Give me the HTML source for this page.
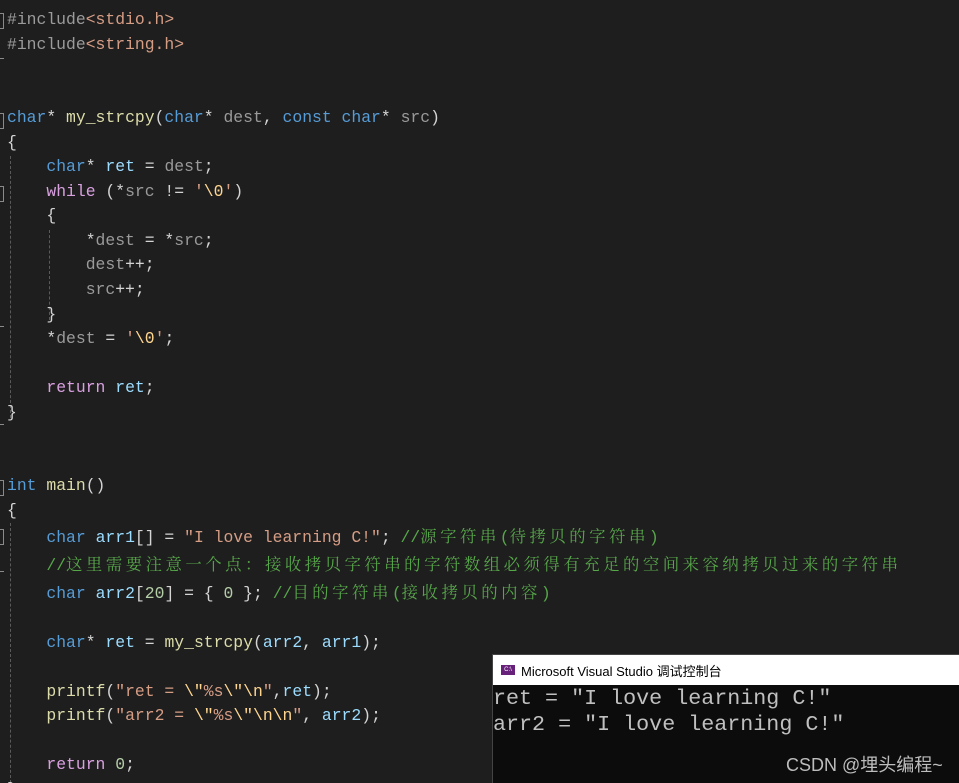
<!DOCTYPE html>
<html><head><meta charset="utf-8"><style>
html,body{margin:0;padding:0;background:#1e1e1e;width:959px;height:783px;overflow:hidden;position:relative}
pre{position:absolute;left:7px;top:8px;margin:0;font-family:"Liberation Mono","Noto Sans CJK SC",monospace;font-size:16.4px;line-height:24.55px;color:#d4d4d4;white-space:pre}
.k{color:#569cd6}.f{color:#dcdcaa}.v{color:#9cdcfe}.p{color:#9a9a9a}.s{color:#d69d85}.e{color:#ffd68f}.c{color:#57a64a}.n{color:#b5cea8}.r{color:#d8a0df}.i{color:#9b9b9b}
.z{font-family:"Noto Serif CJK SC","Noto Sans CJK SC",serif;letter-spacing:3.5px}
.g{position:absolute;width:0;border-left:1px dashed #5a5a5a}
.b{position:absolute;left:0;width:3px;height:14px;border:1px solid #8a8a8a;border-left:none}
.t{position:absolute;left:0;width:4px;height:0;border-top:1px solid #8a8a8a}
.con{position:absolute;left:492px;top:654px;width:467px;height:129px;background:#0c0c0c;border-left:1px solid #444;border-top:1px solid #444}
.tb{height:30px;background:#fff;display:flex;align-items:center;font:13px "Liberation Sans","Noto Sans CJK SC",sans-serif;color:#000}
.ic{width:14px;height:10px;background:#68217a;margin:0 6px 0 8px;color:#fff;font-size:6px;line-height:10px;text-align:center}
.ct{position:absolute;left:0;top:31px;font-family:"Liberation Mono",monospace;font-size:21.7px;line-height:25.5px;color:#c0c0c0;white-space:pre}
.wm{position:absolute;left:293px;top:96px;font:18px "Liberation Sans","Noto Sans CJK SC",sans-serif;color:#bdbdbd}
</style></head><body>
<div class="b" style="top:13px"></div>
<div class="t" style="top:58px"></div>
<div class="b" style="top:113px"></div>
<div class="b" style="top:186px"></div>
<div class="t" style="top:326px"></div>
<div class="t" style="top:424px"></div>
<div class="b" style="top:480px"></div>
<div class="b" style="top:529px"></div>
<div class="t" style="top:571px"></div>
<div class="g" style="left:10px;top:156px;height:262px"></div>
<div class="g" style="left:49px;top:230px;height:90px"></div>
<div class="g" style="left:10px;top:523px;height:260px"></div>
<pre><span class="i">#include</span><span class="s">&lt;stdio.h&gt;</span>
<span class="i">#include</span><span class="s">&lt;string.h&gt;</span>


<span class="k">char</span>* <span class="f">my_strcpy</span>(<span class="k">char</span>* <span class="p">dest</span>, <span class="k">const</span> <span class="k">char</span>* <span class="p">src</span>)
{
    <span class="k">char</span>* <span class="v">ret</span> = <span class="p">dest</span>;
    <span class="r">while</span> (*<span class="p">src</span> != <span class="s">'</span><span class="e">\0</span><span class="s">'</span>)
    {
        *<span class="p">dest</span> = *<span class="p">src</span>;
        <span class="p">dest</span>++;
        <span class="p">src</span>++;
    }
    *<span class="p">dest</span> = <span class="s">'</span><span class="e">\0</span><span class="s">'</span>;

    <span class="r">return</span> <span class="v">ret</span>;
}


<span class="k">int</span> <span class="f">main</span>()
{
    <span class="k">char</span> <span class="v">arr1</span>[] = <span class="s">"I love learning C!"</span>; <span class="c">//<span class="z">源字符串</span>(<span class="z">待拷贝的字符串</span>)</span>
    <span class="c">//<span class="z">这里需要注意一个点：接收拷贝字符串的字符数组必须得有充足的空间来容纳拷贝过来的字符串</span></span>
    <span class="k">char</span> <span class="v">arr2</span>[<span class="n">20</span>] = { <span class="n">0</span> }; <span class="c">//<span class="z">目的字符串</span>(<span class="z">接收拷贝的内容</span>)</span>

    <span class="k">char</span>* <span class="v">ret</span> = <span class="f">my_strcpy</span>(<span class="v">arr2</span>, <span class="v">arr1</span>);

    <span class="f">printf</span>(<span class="s">"ret = </span><span class="e">\"</span><span class="s">%s</span><span class="e">\"\n</span><span class="s">"</span>,<span class="v">ret</span>);
    <span class="f">printf</span>(<span class="s">"arr2 = </span><span class="e">\"</span><span class="s">%s</span><span class="e">\"\n\n</span><span class="s">"</span>, <span class="v">arr2</span>);

    <span class="r">return</span> <span class="n">0</span>;
}</pre>
<div class="con">
<div class="tb"><div class="ic">C:\</div>Microsoft Visual Studio 调试控制台</div>
<div class="ct">ret = "I love learning C!"
arr2 = "I love learning C!"</div>
<div class="wm">CSDN @埋头编程~</div>
</div>
</body></html>
